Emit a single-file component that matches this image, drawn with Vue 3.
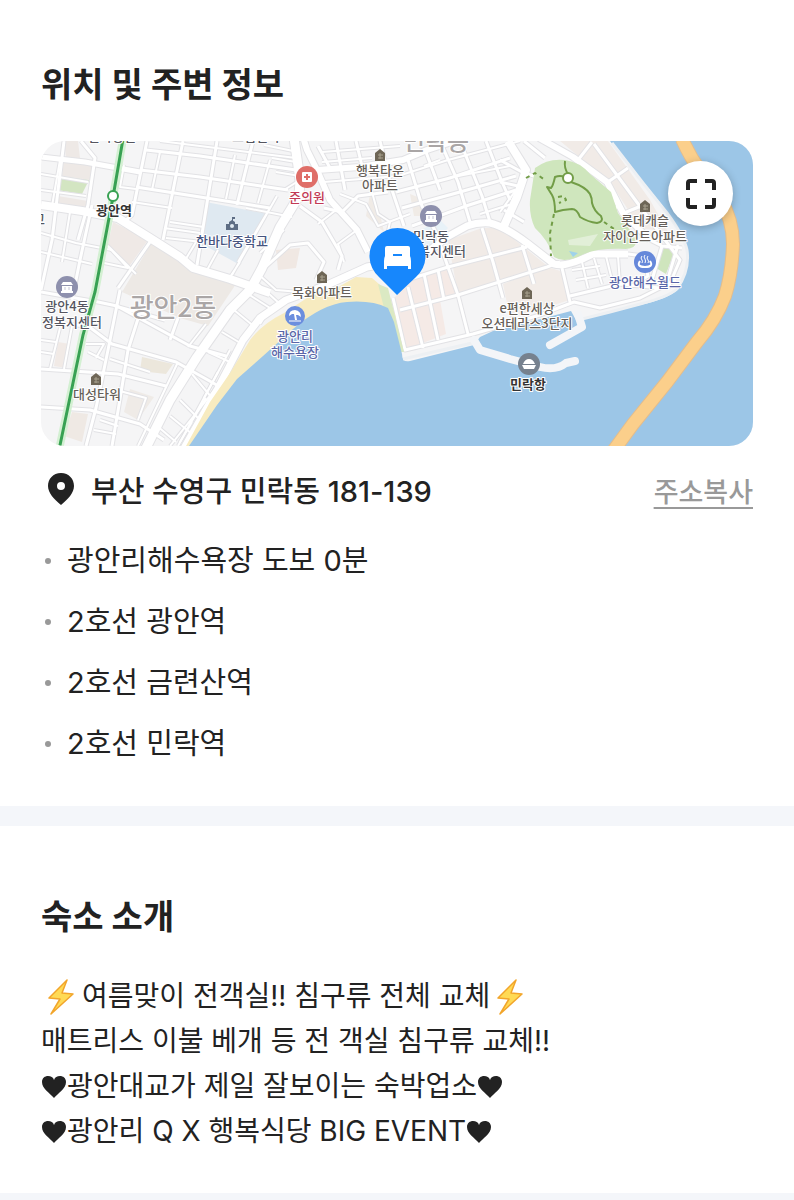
<script setup>

    import { ref } from 'vue';

    // Dirección y lugares cercanos
    const address = '부산 수영구 민락동 181-139';
    const nearby = ['광안리해수욕장 도보 0분', '2호선 광안역', '2호선 금련산역', '2호선 민락역'];

    // Estado del mapa ampliado
    const isExpanded = ref(false);

    // Calles del mapa: trazado y ancho
    const roads = [
        // Cuadrícula noroeste
        {d: 'M64 141L52 240L41 290', w: 3},
        {d: 'M81 141L95 158L88 205L78 240', w: 3},
        {d: 'M41 174L88 182M41 190L86 196M60 160L52 206', w: 2},
        {d: 'M41 233L76 243L112 250M41 252L92 264M70 212L62 262', w: 2},
        {d: 'M92 205L80 260L72 300', w: 3},
        {d: 'M147 141L132 215L124 222', w: 3},
        {d: 'M183 141L163 240M217 141L197 265M253 141L237 205', w: 3},
        {d: 'M146 150L200 156L296 170', w: 3},
        {d: 'M140 170L200 177L288 190', w: 3},
        {d: 'M136 187L200 197L270 208', w: 3},
        {d: 'M132 202L172 208M170 222L204 227M166 238L202 242', w: 2},
        {d: 'M160 141L296 158M164 228L200 233', w: 2},
        {d: 'M124 165L120 187L136 189M160 152L152 190M235 155L226 199M270 160L258 203', w: 2},
        {d: 'M270 208L238 262M277 196L232 275M246 208L292 217M196 242L184 262M218 250L206 272M240 262L228 280', w: 2},
        // Zona suroeste
        {d: 'M41 292L98 302L117 306L190 346L226 356', w: 3},
        {d: 'M41 322L88 326L112 344L176 362L222 388', w: 3},
        {d: 'M41 369L72 371L118 374L166 386', w: 3},
        {d: 'M41 407L90 410L140 424L164 440', w: 3},
        {d: 'M120 290L108 350L96 408L86 446', w: 3},
        {d: 'M144 300L128 350L119 405L112 446', w: 3},
        {d: 'M150 242L118 288M115 306L165 320M178 318L170 340', w: 3},
        {d: 'M110 359L150 372M116 390L146 398L138 420M100 420L118 426M94 430L116 434', w: 2},
        {d: 'M60 328L50 369M72 326L64 369M86 344L104 344L96 358M88 352L104 360', w: 2},
        {d: 'M41 340L56 342M41 352L54 354M102 240L128 268L104 263M108 246L136 274', w: 2},
        {d: 'M178 362L138 446M206 324L188 347', w: 2},
        {d: 'M230 350L178 446M216 388L170 446', w: 2},
        {d: 'M180 400L200 420M170 416L192 434M192 374L212 398M208 352L230 362M222 332L242 344M234 310L256 328M156 425L176 442', w: 2},
        {d: 'M218 372L204 398M206 398L190 424M192 422L180 442', w: 2},
        {d: 'M248 294L270 308L260 324M258 284L280 304', w: 2},
        // Zona centro
        {d: 'M262 270L290 245L308 243L324 262L316 280', w: 3},
        {d: 'M260 253L284 230M258 274L276 290L300 292', w: 2},
        {d: 'M300 206L322 222L342 256L338 270', w: 3},
        {d: 'M324 208L342 212L358 196L388 192', w: 3},
        {d: 'M336 210L318 224M357 230L338 244L344 262M372 192L378 214L390 222L386 240', w: 2},
        {d: 'M340 194L366 204L378 226L410 214', w: 2},
        {d: 'M318 146L330 168M336 141L345 190M356 141L362 166M380 141L392 190L404 226M408 160L422 206L440 240', w: 3},
        {d: 'M322 152L400 146M322 162L372 158M324 182L398 176L448 160L520 141', w: 2},
        {d: 'M396 192L450 178L510 158M402 208L460 192L516 176M412 226L466 206L516 190', w: 3},
        {d: 'M440 141L458 182L470 222M460 141L482 196L490 222M486 141L502 182L510 200M426 152L440 190', w: 3},
        {d: 'M264 145L298 152M272 158L296 162M276 172L300 176M300 180L284 190', w: 2},
        {d: 'M500 212L516 190M480 214L512 204M424 166L440 160M448 178L510 166', w: 2},
        // Puerto y apartamentos
        {d: 'M400 310L458 295L547 267L560 262', w: 3},
        {d: 'M410 279L448 267L527 247', w: 3},
        {d: 'M408 287L423 348M424 274L438 340M438 270L444 300', w: 3},
        {d: 'M438 238L448 267L458 295L468 334', w: 3},
        {d: 'M482 228L493 262L503 298M522 245L534 284M562 268L570 302', w: 3},
        {d: 'M393 298L405 350L473 334L540 315L574 302L600 308L640 298L676 280', w: 3},
        {d: 'M570 296L620 284L660 288', w: 3},
        {d: 'M572 270L600 266M576 280L606 275M582 262L588 288M594 258L602 284M606 256L612 280M618 256L620 284', w: 2},
        {d: 'M628 254L644 256L648 276L632 286M662 246L652 280M678 245L666 285', w: 3},
        {d: 'M650 240L662 246L682 248M618 205L606 222L620 235', w: 3},
        {d: 'M594 144L650 220L680 260L668 288', w: 3},
        {d: 'M578 160L592 142M608 182L628 168M624 213L646 204', w: 3},
        {d: 'M500 160L522 172L545 180M500 182L518 186M504 210L524 222M524 141L545 158', w: 3},
        // Avenidas
        {d: 'M41 157L85 162L140 172', w: 5},
        {d: 'M41 205L82 211L118 218L150 238L180 257L193 268L230 279L270 293', w: 8},
        {d: 'M317 170L360 167L403 160L427 150L467 137', w: 6},
        {d: 'M303 137L307 150L317 170L330 200L357 230L368 252', w: 6},
        {d: 'M145 450L170 400L197 357L230 310L250 290L262 268L280 227L299 196L300 180L294 138', w: 9},
        {d: 'M183 450L217 390L243 340L260 318L286 300L327 285L367 267L420 258L447 237L467 226Q478 222 490 223Q504 226 527 243L554 264Q566 268 593 254L628 254', w: 7},
        {d: 'M504 226L517 197L526 170L508 141', w: 8},
        {d: 'M539 138L573 157L607 182L623 213L650 240', w: 6},
    ];

    // Manzanas y edificios destacados
    const blocks = [
        {p: '113,222 148,240 128,268 108,244', c: '#efe9e6'},
        {p: '152,242 190,270 236,284 208,326 180,318 122,292', c: '#ede9e5'},
        {p: '64,158 94,166 90,180 62,176', c: '#eee9e6'},
        {p: '64,141 78,141 80,158 66,158', c: '#eee9e6'},
        {p: '58,196 88,201 84,212 56,206', c: '#eee9e6'},
        {p: '60,176 89,180 82,194 57,190', c: '#d3e5c2'},
        {p: '206,202 268,214 240,265 202,244', c: '#dfe9f1'},
        {p: '142,357 173,364 166,374 140,371', c: '#ece7dc'},
        {p: '130,389 154,397 138,420 124,412', c: '#efebe7'},
        {p: '72,412 88,414 82,442 64,436', c: '#efe9e4'},
        {p: '58,342 70,344 66,368 54,366', c: '#f1eae6'},
        {p: '370,194 380,214 384,232 366,216', c: '#f0ebe6'},
        {p: '410,194 420,198 426,216 414,216', c: '#f0ebe6'},
        {p: '276,250 300,248 296,268 278,270', c: '#f0e8e3'},
        {p: '448,240 482,228 500,228 550,268 458,295', c: '#f1ebe7'},
        {p: '392,300 414,278 448,267 458,295 440,300 446,334 405,350', c: '#f5eae6'},
        {p: '503,284 547,267 564,272 570,300 510,318', c: '#f2ece8'},
        {p: '560,141 608,141 650,200 668,232 640,228 610,182', c: '#f1ebe7'},
        {p: '660,248 676,248 666,274 656,268', c: '#cfe5bd'},
        {p: '405,238 440,220 448,228 426,252', c: '#e8f2f8'},
    ];

    // Rótulos: posición, texto y estilo
    const labels = [
        {x: 112, y: 141, t: '한사랑빌', k: 'dark'},
        {x: 256, y: 141, t: '드림빌라', k: 'dark'},
        {x: 436, y: 150, t: '민락동', k: 'district small'},
        {x: 114, y: 215, t: '광안역', k: 'station'},
        {x: 232, y: 246, t: '한바다중학교', k: 'navy'},
        {x: 307, y: 202, t: '준의원', k: 'red'},
        {x: 380, y: 175, t: '행복타운', k: 'brown'},
        {x: 380, y: 190, t: '아파트', k: 'brown'},
        {x: 431, y: 241, t: '민락동', k: 'dark'},
        {x: 430, y: 256, t: '행정복지센터', k: 'dark'},
        {x: 322, y: 297, t: '목화아파트', k: 'brown'},
        {x: 645, y: 225, t: '롯데캐슬', k: 'brown'},
        {x: 645, y: 241, t: '자이언트아파트', k: 'brown'},
        {x: 645, y: 287, t: '광안해수월드', k: 'violet'},
        {x: 67, y: 311, t: '광안4동', k: 'dark'},
        {x: 66, y: 327, t: '행정복지센터', k: 'dark'},
        {x: 173, y: 317, t: '광안2동', k: 'district'},
        {x: 295, y: 341, t: '광안리', k: 'violet'},
        {x: 295, y: 357, t: '해수욕장', k: 'violet'},
        {x: 527, y: 313, t: 'e편한세상', k: 'brown'},
        {x: 527, y: 328, t: '오션테라스3단지', k: 'brown'},
        {x: 528, y: 389, t: '민락항', k: 'station'},
        {x: 97, y: 399, t: '대성타워', k: 'brown'},
        {x: 39, y: 224, t: '교', k: 'dark'},
    ];

    const houses = [[380, 155], [322, 277], [645, 206], [527, 293], [96, 379]];
    const offices = [[67, 287], [431, 216]];

    /**
     * Copia la dirección en el portapapeles
     * @function
     * @name copyAddress
     */
    const copyAddress = async () => {
        await navigator.clipboard?.writeText(address);
    }

</script>

<template>
    <main class="page">

        <section class="section">
            <h2 class="title">위치 및 주변 정보</h2>

            <div class="map" :class="{'map-expanded': isExpanded}">
                <svg class="map-canvas" viewBox="41 141 712 305" preserveAspectRatio="xMidYMid slice" role="img" aria-label="지도">
                    <rect x="41" y="141" width="712" height="305" fill="#f5f5f6" />
                    <polygon v-for="(b, i) in blocks" :key="'b' + i" :points="b.p" :fill="b.c" />

                    <!-- Calles -->
                    <path v-for="(r, i) in roads" :key="'c' + i" class="road road-case" :d="r.d" :stroke-width="r.w + 2" />
                    <path v-for="(r, i) in roads" :key="'r' + i" class="road road-fill" :d="r.d" :stroke-width="r.w" />

                    <!-- Parque -->
                    <path fill="#cfe6bd" d="M535 168Q548 158 565 160Q580 162 590 174L611 192L618 213L634 236Q640 248 626 249Q597 248 584 254Q565 264 554 257Q548 240 535 228Q529 216 530 200Z" />
                    <path fill="#e2efd8" d="M568 240L598 234L590 246L569 245Z" />
                    <path fill="#9fd2ea" d="M569 251L578 253L573 257Z" />

                    <!-- Playa y mar -->
                    <path fill="#f7ebc0" d="M186 446L210 402L230 373L250 340Q262 324 284 313L310 296L333 290L356 277L372 278L386 290L396 318L392 326L340 322L240 390L196 446Z" />
                    <path fill="#dbe9c3" d="M378 284L388 288L404 352L398 352L384 308Z" />
                    <path fill="#9cc6e7" d="M189 446L217 405L237 379L263 356L293 329Q322 304 347 302Q372 300 388 308L394 322L402 354Q402 363 410 361L474 345L480 337L493 331L533 321L571 311L576 320L600 315L640 305Q668 299 677 290Q690 272 687 250Q684 236 667 213L643 183L610 141H753V446Z" />
                    <path fill="none" stroke="#edf0f3" stroke-width="3" d="M403 359L472 343M582 319L610 312L640 304Q668 297 677 289Q690 270 687 250Q684 236 667 213L643 183L612 143" />
                    <path class="pier" stroke-width="8" d="M474 340L480 350L510 359L540 367Q556 371 566 363L575 361" />
                    <path class="pier" stroke-width="8" d="M578 314L582 327L550 345" />

                    <!-- Puente -->
                    <path class="bridge bridge-case" d="M682 139Q690 157 701 172L720 198Q733 220 733 244Q732 274 725 296Q716 320 697 342L667 382L633 424L614 450" />
                    <path class="bridge" d="M682 139Q690 157 701 172L720 198Q733 220 733 244Q732 274 725 296Q716 320 697 342L667 382L633 424L614 450" />

                    <!-- Senderos -->
                    <path class="trail" d="M565 161Q564 168 568 174M571 182Q586 187 590 194Q592 198 592 203Q594 211 601 216Q604 222 597 223Q588 222 580 217Q577 209 572 209L563 210L555 212Q555 200 552 195L547 187L551 188Q553 186 555 177Q560 175 565 177" />
                    <path class="trail trail-dashed" d="M526 178L535 173L545 180M554 214L550 233L551 256M604 222L614 229M558 197L564 196L566 200L559 203" />
                    <circle cx="568" cy="178" r="5" fill="#ffffff" stroke="#729d47" stroke-width="2" />

                    <!-- Línea de metro -->
                    <path fill="none" stroke="#d3f0d2" stroke-width="8" d="M123 139L113 197L95 292L83 335L59 450" />
                    <path fill="none" stroke="#38a153" stroke-width="3" d="M123 139L113 197L95 292L83 335L59 450" />
                    <circle cx="113" cy="196" r="5" fill="#ffffff" stroke="#38a153" stroke-width="2" />

                    <text v-for="(l, i) in labels" :key="'l' + i" class="label" :class="l.k" :x="l.x" :y="l.y">{{ l.t }}</text>

                    <!-- Iconos de lugares -->
                    <g v-for="(h, i) in houses" :key="'h' + i" :transform="`translate(${h[0]} ${h[1]})`">
                        <path fill="#6e6656" d="M-5 6V-2L0 -6L5 -2V6Z" />
                        <path fill="none" stroke="#a8a18e" d="M-2 0H3M-2 3H3M0 -2V4" />
                    </g>
                    <g v-for="(o, i) in offices" :key="'o' + i" :transform="`translate(${o[0]} ${o[1]})`">
                        <circle r="11" fill="#8e90ad" />
                        <path fill="#ffffff" d="M-6 -2L-4 -5H4L6 -2ZM-5 -1H5V4H-5ZM-6 4H6V6H-6Z" />
                        <path stroke="#c5c6d6" d="M-2 0V3M2 0V3" />
                    </g>
                    <g transform="translate(232 225)" fill="#5d6d84">
                        <path d="M-6 5V-1H-3V-3L0 -5L3 -3V-1H6V5Z" />
                        <path d="M0 -4V-8H3V-6H1V-4Z" />
                        <circle cy="1" r="2" fill="#dfe9f1" />
                    </g>
                    <g transform="translate(307 177)">
                        <circle r="11" fill="#df6e68" />
                        <rect x="-5" y="-5" width="10" height="10" rx="1" fill="#ffffff" />
                        <path stroke="#df6e68" stroke-width="2" d="M-3 0H3M0 -3V3" />
                    </g>
                    <g transform="translate(295 316)">
                        <circle r="10" fill="#6b8ede" />
                        <path fill="#ffffff" d="M-6 0Q-6 -6 0 -6Q6 -5 6 1L3 -1L1 -1L2 4H0L-1 -2L-3 -2Z" />
                        <path stroke="#ffffff" d="M-6 5H6" />
                    </g>
                    <g transform="translate(645 262)" fill="none" stroke="#ffffff">
                        <circle r="11" fill="#6688da" stroke="none" />
                        <path d="M-3 -6Q-5 -4 -3 -2Q-2 -1 -3 1M0 -7Q-2 -5 0 -3Q1 -1 0 1M3 -6Q1 -4 3 -2Q4 -1 3 1" />
                        <path stroke-width="2" d="M-5 -1Q-9 5 0 5Q9 5 5 -1" />
                    </g>
                    <g transform="translate(529 364)">
                        <circle r="11" fill="#76818e" />
                        <path fill="#ffffff" d="M-7 1H7L5 5H-5ZM-6 0Q-4 -5 0 -5Q4 -5 6 0Z" />
                    </g>

                    <!-- Marcador del alojamiento -->
                    <path fill="#1787fc" d="M397 295L379 277A28 28 0 1 1 416 277Z" />
                    <path fill="#ffffff" d="M387 246H408Q410 246 410 248V256Q411 258 411 261V269H408V266H387V269H384V261Q384 258 385 256V248Q385 246 387 246Z" />
                    <path stroke="#1787fc" stroke-width="2" d="M393 255H402" />
                </svg>

                <button class="btn-expand" type="button" aria-label="지도 크게 보기" @click="isExpanded = !isExpanded">
                    <svg width="32" height="32" viewBox="0 0 32 32" aria-hidden="true">
                        <path fill="none" stroke="#222222" stroke-width="4" d="M3 12V5Q3 3 5 3H12M20 3H27Q29 3 29 5V12M29 20V27Q29 29 27 29H20M12 29H5Q3 29 3 27V20" />
                    </svg>
                </button>
            </div>

            <div class="address-row">
                <svg class="icon-pin" width="28" height="34" viewBox="0 0 28 34" aria-hidden="true">
                    <path fill="#222222" fill-rule="evenodd" d="M14 1C6 1 1 7 1 14C1 21 7 27 14 33C21 27 27 21 27 14C27 7 22 1 14 1ZM14 10A4 4 0 1 1 14 18A4 4 0 1 1 14 10Z" />
                </svg>
                <span class="address">{{ address }}</span>
                <button class="btn-copy" type="button" @click="copyAddress">주소복사</button>
            </div>

            <ul class="nearby">
                <li v-for="place in nearby" :key="place">{{ place }}</li>
            </ul>
        </section>

        <div class="divider"></div>

        <section class="section section-intro">
            <h2 class="title">숙소 소개</h2>
            <div class="intro">
                <p>
                    <svg class="icon-bolt" viewBox="0 0 26 36" aria-hidden="true"><path fill="#ffda55" stroke="#f2a52b" stroke-width="1.5" stroke-linejoin="round" d="M19 1L1 19L12 20L3 35L25 15L14 14Z" /></svg>
                    여름맞이 전객실!! 침구류 전체 교체
                    <svg class="icon-bolt" viewBox="0 0 26 36" aria-hidden="true"><path fill="#ffda55" stroke="#f2a52b" stroke-width="1.5" stroke-linejoin="round" d="M19 1L1 19L12 20L3 35L25 15L14 14Z" /></svg>
                </p>
                <p>매트리스 이불 베개 등 전 객실 침구류 교체!!</p>
                <p v-for="line in ['광안대교가 제일 잘보이는 숙박업소', '광안리 Q X 행복식당 BIG EVENT']" :key="line">
                    <svg class="icon-heart" viewBox="0 0 26 24" aria-hidden="true"><path d="M13 23C9 18 1 14 1 7C1 3 4 1 7 1C10 1 12 2 13 5C14 2 16 1 19 1C22 1 25 3 25 7C25 14 17 18 13 23Z" /></svg><span>{{ line }}</span><svg class="icon-heart" viewBox="0 0 26 24" aria-hidden="true"><path d="M13 23C9 18 1 14 1 7C1 3 4 1 7 1C10 1 12 2 13 5C14 2 16 1 19 1C22 1 25 3 25 7C25 14 17 18 13 23Z" /></svg>
                </p>
            </div>
        </section>

        <div class="divider divider-last"></div>

    </main>
</template>

<style>
    body {
        margin: 0;
        background-color: #ffffff;
    }
</style>

<style scoped>

    .page{
        display: flex;
        flex-direction: column;
        min-height: 100vh;
        color: #222222;
        font-family: Inter, "Noto Sans CJK KR", sans-serif;
        font-size: 29px;
    }

    .section{
        padding: 61px 41px 42px;
    }

    .section-intro{
        padding: 67px 41px 39px;
    }

    .title{
        margin: 0 0 32px;
        font-size: 34px;
        font-weight: 700;
        line-height: 48px;
    }

    .map{
        position: relative;
        overflow: hidden;
        aspect-ratio: 712 / 305;
        border-radius: 24px;
    }

    .map-expanded{
        aspect-ratio: 1 / 1;
    }

    .map-canvas{
        display: block;
        width: 100%;
        height: 100%;
    }

    .road{
        fill: none;
        stroke-linejoin: round;
    }

    .road-case{
        stroke: #e2e2e5;
    }

    .road-fill{
        stroke: #ffffff;
    }

    .pier{
        fill: none;
        stroke: #f3f5f8;
        stroke-linecap: round;
        stroke-linejoin: round;
    }

    .bridge{
        fill: none;
        stroke: #fbcf8b;
        stroke-width: 12px;
    }

    .bridge-case{
        stroke: #e3bd8c;
        stroke-width: 14px;
    }

    .trail{
        fill: none;
        stroke: #729d47;
        stroke-width: 2px;
        stroke-linejoin: round;
    }

    .trail-dashed{
        stroke-dasharray: 4 4;
    }

    .label{
        font-family: "Noto Sans CJK KR", sans-serif;
        font-size: 13px;
        font-weight: 500;
        text-anchor: middle;
        paint-order: stroke;
        stroke: #ffffff;
        stroke-width: 2px;
        stroke-linejoin: round;
    }

    .dark{
        fill: #55555f;
    }

    .brown{
        fill: #665f59;
    }

    .station{
        fill: #333333;
        font-weight: 700;
    }

    .navy{
        fill: #46547f;
    }

    .red{
        fill: #c23a55;
    }

    .violet{
        fill: #5a66a8;
    }

    .district{
        fill: #aaa6a6;
        font-size: 26px;
        font-weight: 500;
    }

    .small{
        font-size: 24px;
    }

    .btn-expand{
        position: absolute;
        top: 20px;
        right: 20px;
        display: flex;
        justify-content: center;
        align-items: center;
        width: 65px;
        height: 65px;
        padding: 0;
        border: none;
        border-radius: 50%;
        background-color: #ffffff;
        box-shadow: 0 2px 8px rgba(0, 0, 0, 0.24);
        cursor: pointer;
    }

    .address-row{
        display: flex;
        align-items: center;
        margin-top: 25px;
        line-height: 42px;
    }

    .icon-pin{
        margin: 0 16px 6px 6px;
    }

    .address{
        flex: 1;
        font-weight: 500;
    }

    .btn-copy{
        padding: 2px 0 0;
        border: none;
        background: none;
        color: #999999;
        font-family: inherit;
        font-size: 27px;
        font-weight: 500;
        line-height: 40px;
        text-decoration: underline;
        text-decoration-thickness: 2px;
        text-underline-offset: 5px;
        cursor: pointer;
    }

    .nearby{
        display: flex;
        flex-direction: column;
        gap: 21px;
        margin: 28px 0 0;
        padding: 0;
        list-style: none;
        line-height: 40px;
    }

    .nearby li{
        display: flex;
        align-items: center;
    }

    .nearby li::before{
        content: "";
        width: 6px;
        height: 6px;
        margin: 0 16px 0 4px;
        border-radius: 50%;
        background-color: #999999;
    }

    .divider{
        height: 20px;
        background-color: #f4f6fa;
    }

    .divider-last{
        flex: 1;
        height: auto;
        min-height: 7px;
    }

    .intro{
        margin-top: 33px;
        font-size: 28px;
        line-height: 45px;
    }

    .intro p{
        display: flex;
        align-items: center;
        margin: 0;
    }

    .icon-bolt{
        width: 26px;
        height: 36px;
        margin: 0 8px 0 7px;
    }

    .icon-heart{
        width: 26px;
        height: 24px;
        fill: #222222;
    }
</style>
